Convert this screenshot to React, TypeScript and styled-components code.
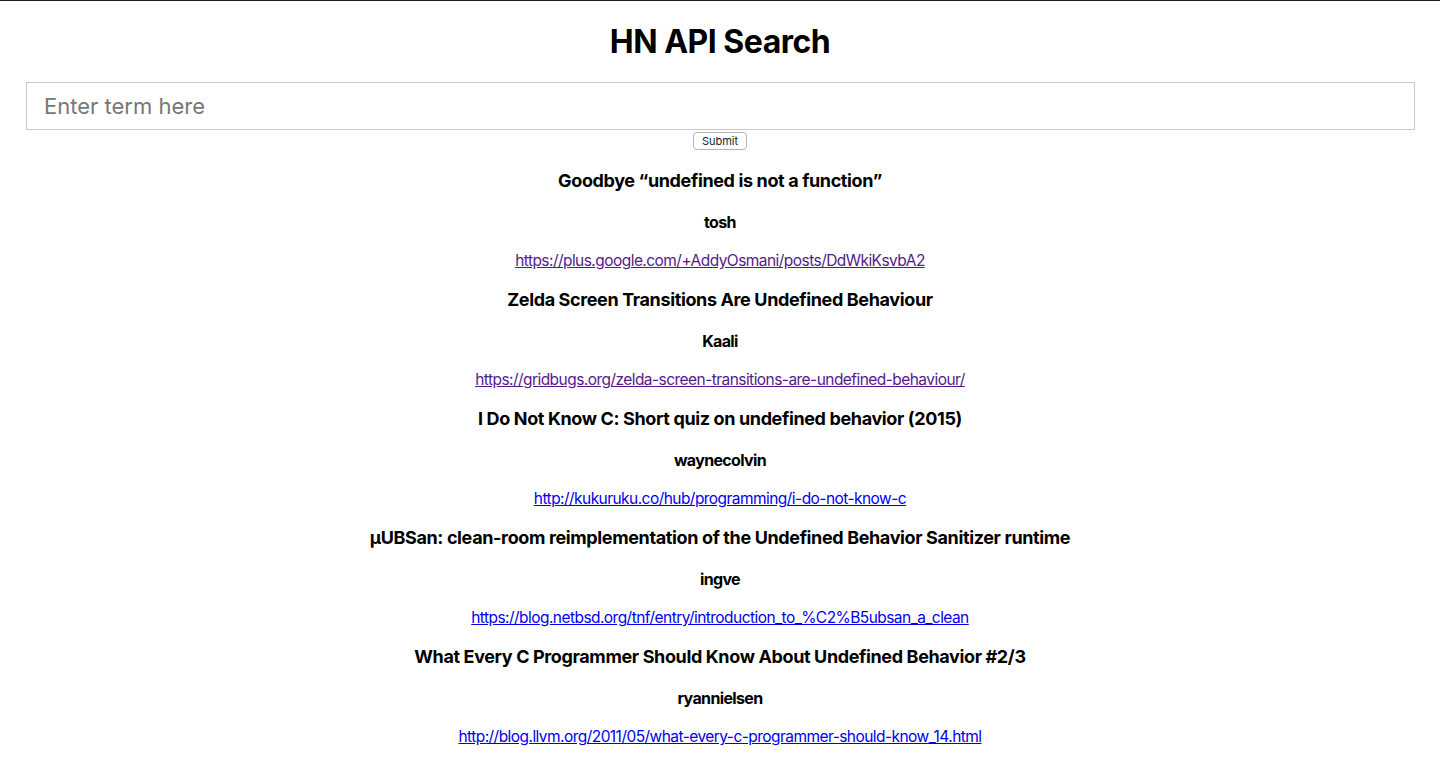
import React from "react";
import styled, { createGlobalStyle } from "styled-components";

const Global = createGlobalStyle`
  html, body { margin: 0; padding: 0; background: #fff; }
  body { font-family: Inter, "Noto Sans", sans-serif; color: #000; }
`;

const Page = styled.div`
  border-top: 1px solid #1c1c1c;
  min-height: 765px;
  display: flex;
  flex-direction: column;
  align-items: center;
`;

const Title = styled.h1`
  margin: 21px 0 20px;
  font-size: 32px;
  line-height: 40px;
  font-weight: 700;
  letter-spacing: -0.5px;
`;

const SearchInput = styled.input`
  box-sizing: border-box;
  width: calc(100% - 51px);
  margin-left: 1px;
  height: 48px;
  border: 1px solid #c8c8c8;
  border-radius: 0;
  padding: 0 17px;
  font-family: Inter, sans-serif;
  font-size: 22px;
  color: #000;
  outline: none;
  &::placeholder { color: #777; }
`;

const SubmitButton = styled.button`
  margin-top: 2px;
  height: 18px;
  padding: 0 8px;
  font-family: Inter, sans-serif;
  font-size: 11px;
  line-height: 16px;
  color: #222;
  background: #fff;
  border: 1px solid #b5b5b5;
  border-radius: 4px;
`;

const Results = styled.div`
  margin-top: 19px;
  display: flex;
  flex-direction: column;
  align-items: center;
`;

const Item = styled.div`
  display: flex;
  flex-direction: column;
  align-items: center;
  gap: 19px;
  margin-bottom: 17px;
`;

const ItemTitle = styled.h3`
  margin: 0;
  font-size: 18px;
  line-height: 24px;
  font-weight: 700;
  letter-spacing: -0.37px;
`;

const Author = styled.h4`
  margin: 0;
  font-size: 16px;
  line-height: 20px;
  font-weight: 700;
  letter-spacing: -0.65px;
`;

const Link = styled.a<{ $visited?: boolean }>`
  font-size: 15.5px;
  line-height: 20px;
  letter-spacing: -0.55px;
  color: ${(p) => (p.$visited ? "#551a8b" : "#0000ee")};
  text-decoration: underline;
`;

const items = [
  {
    title: "Goodbye “undefined is not a function”",
    author: "tosh",
    url: "https://plus.google.com/+AddyOsmani/posts/DdWkiKsvbA2",
    visited: true,
  },
  {
    title: "Zelda Screen Transitions Are Undefined Behaviour",
    author: "Kaali",
    url: "https://gridbugs.org/zelda-screen-transitions-are-undefined-behaviour/",
    visited: true,
  },
  {
    title: "I Do Not Know C: Short quiz on undefined behavior (2015)",
    author: "waynecolvin",
    url: "http://kukuruku.co/hub/programming/i-do-not-know-c",
  },
  {
    title: "µUBSan: clean-room reimplementation of the Undefined Behavior Sanitizer runtime",
    author: "ingve",
    url: "https://blog.netbsd.org/tnf/entry/introduction_to_%C2%B5ubsan_a_clean",
  },
  {
    title: "What Every C Programmer Should Know About Undefined Behavior #2/3",
    author: "ryannielsen",
    url: "http://blog.llvm.org/2011/05/what-every-c-programmer-should-know_14.html",
  },
];

export default function App() {
  return (
    <>
      <Global />
      <Page>
        <Title>HN API Search</Title>
        <SearchInput placeholder="Enter term here" />
        <SubmitButton>Submit</SubmitButton>
        <Results>
          {items.map((it) => (
            <Item key={it.url}>
              <ItemTitle>{it.title}</ItemTitle>
              <Author>{it.author}</Author>
              <Link href={it.url} $visited={it.visited}>
                {it.url}
              </Link>
            </Item>
          ))}
        </Results>
      </Page>
    </>
  );
}
